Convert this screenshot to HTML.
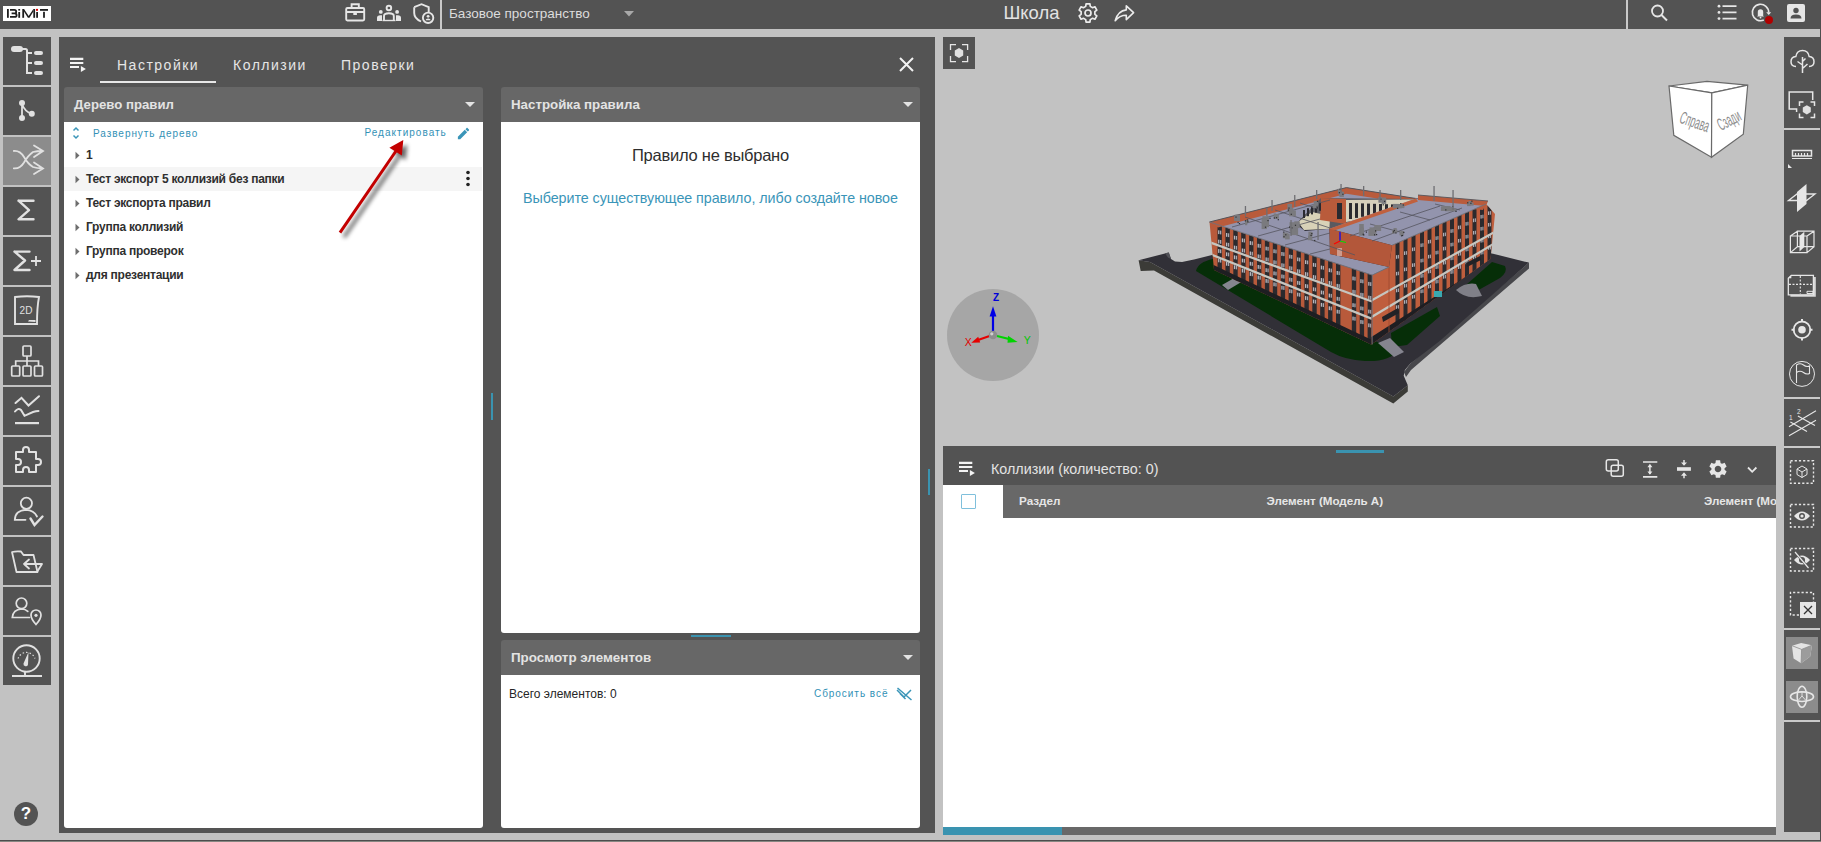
<!DOCTYPE html>
<html><head><meta charset="utf-8">
<style>
*{box-sizing:border-box;margin:0;padding:0}
html,body{width:1821px;height:842px;overflow:hidden;background:#c2c2c2;font-family:"Liberation Sans",sans-serif;position:relative}
.a{position:absolute}
.dk{background:#535353}
.hd{background:#676767;border-radius:3px 3px 0 0}
.wh{background:#fff}
.t{position:absolute;white-space:nowrap;line-height:1}
svg{position:absolute;overflow:visible}
</style></head>
<body>
<!-- top bar -->
<div class="a dk" style="left:0;top:0;width:1821px;height:29px"></div>
<div class="a" style="left:440px;top:0;width:2px;height:29px;background:#c9c9c9"></div>
<div class="a" style="left:1626px;top:0;width:2px;height:29px;background:#c9c9c9"></div>
<div class="a" style="left:1820px;top:0;width:1px;height:842px;background:#4e4e4e"></div>
<!-- logo -->
<div class="a" style="left:3px;top:6px;width:48px;height:15px;background:#fff"></div>
<svg width="48" height="15" viewBox="0 0 48 15" style="left:3px;top:6px">
<g fill="#1e1e1e">
<rect x="4" y="3" width="1.8" height="8.8"/>
<path d="M7 3.9H11.3Q13.2 3.9 13.2 5.65Q13.2 7.4 11.3 7.4H8.6M8.6 7.4H11.6Q13.6 7.4 13.6 9.15Q13.6 10.9 11.6 10.9H7" fill="none" stroke="#1e1e1e" stroke-width="1.8"/>
<rect x="15.3" y="6" width="1.8" height="5.8"/><rect x="15.3" y="3" width="1.8" height="1.6"/>
<rect x="19.3" y="3" width="1.8" height="8.8"/><rect x="30.3" y="3" width="1.8" height="8.8"/>
<path d="M21 3L25.7 10L30.4 3V5.5L26.5 11.8H24.9L21 5.5Z"/>
<rect x="33.2" y="6" width="1.8" height="5.8"/>
<rect x="37" y="3" width="8" height="1.8"/><rect x="40.1" y="5.8" width="1.8" height="6"/>
</g>
<rect x="33" y="2.9" width="2" height="1.9" fill="#e00000"/>
</svg>
<!-- top icons left -->
<svg width="100" height="28" viewBox="0 0 100 28" style="left:340px;top:0">
<g fill="none" stroke="#e6e6e6" stroke-width="1.9">
<rect x="6.2" y="8" width="18" height="12.5" rx="1.2"/>
<path d="M11.6 7.5V4.2H18.8V7.5M6.2 12H24.2"/>
<rect x="13.3" y="12" width="3.6" height="3" fill="#e6e6e6" stroke="none"/>
<circle cx="48.9" cy="8" r="2.3"/>
<path d="M44 21V16Q44 13.2 48.9 13.2Q53.8 13.2 53.8 16V21"/>
<path d="M58 4.6Q66 2 73.8 7V13M73.8 13" stroke="none"/>
<path d="M74.2 7.2L81.5 4.2L88.7 7.2V12.3"/>
<path d="M74.2 7.2V13Q74.2 18.5 81 21.5"/>
<circle cx="88.1" cy="17.8" r="5.2"/>
</g>
<g fill="#e6e6e6">
<circle cx="40.8" cy="11.9" r="1.9"/><circle cx="57.1" cy="11.9" r="1.9"/>
<path d="M37 21V17.8Q37 15.2 40.3 15.2H42V21Z"/><path d="M61 21V17.8Q61 15.2 57.7 15.2H56V21Z"/>
<circle cx="88.1" cy="16.3" r="1.4"/><path d="M85.6 20.3Q85.6 18.5 88.1 18.5Q90.6 18.5 90.6 20.3Z"/>
</g>
<rect x="42.5" y="19.8" width="13" height="1.4" fill="#e6e6e6"/>
</svg>
<div class="t" style="left:449px;top:6.9px;font-size:13.5px;color:#dcdcdc">Базовое пространство</div>
<svg width="12" height="8" style="left:623px;top:10px"><path d="M1 1H11L6 6.5Z" fill="#a9a9a9"/></svg>
<div class="t" style="left:1003.5px;top:4.4px;font-size:18.4px;color:#e3e3e3">Школа</div>
<!-- gear -->
<svg width="22" height="22" viewBox="0 0 22 22" style="left:1077.3px;top:2px"><path d="M8.72 4.38L9.07 1.90L12.93 1.90L13.28 4.38L15.59 5.72L17.91 4.78L19.84 8.13L17.87 9.66L17.87 12.34L19.84 13.87L17.91 17.22L15.59 16.28L13.28 17.62L12.93 20.10L9.07 20.10L8.72 17.62L6.41 16.28L4.09 17.22L2.16 13.87L4.13 12.34L4.13 9.66L2.16 8.13L4.09 4.78L6.41 5.72Z" fill="none" stroke="#ececec" stroke-width="1.7" stroke-linejoin="round"/><circle cx="11" cy="11" r="3" fill="none" stroke="#ececec" stroke-width="1.7"/></svg>
<!-- share -->
<svg width="22" height="18" viewBox="0 0 22 18" style="left:1113px;top:4px"><path d="M20.6 8.7L13.3 1.8V5.9Q5 6.7 2.2 16.8Q6.5 11.3 13.3 11.3V15.7Z" fill="none" stroke="#ececec" stroke-width="1.6" stroke-linejoin="round"/></svg>
<!-- right top icons -->
<svg width="30" height="28" viewBox="0 0 30 28" style="left:1645px;top:0"><circle cx="12.5" cy="11" r="5.5" fill="none" stroke="#e6e6e6" stroke-width="1.8"/><path d="M16.5 15L22 20.5" stroke="#e6e6e6" stroke-width="2"/></svg>
<svg width="30" height="28" viewBox="0 0 30 28" style="left:1713px;top:0">
<g fill="#e6e6e6"><circle cx="6" cy="6.2" r="1.4"/><circle cx="6" cy="12.4" r="1.4"/><circle cx="6" cy="18.6" r="1.4"/></g>
<path d="M9.5 6.2H23.5M9.5 12.4H23.5M9.5 18.6H23.5" stroke="#e6e6e6" stroke-width="1.8"/></svg>
<svg width="30" height="28" viewBox="0 0 30 28" style="left:1746px;top:0">
<path d="M22.7 12.5A8.2 8.2 0 1 0 17.8 20" fill="none" stroke="#e6e6e6" stroke-width="1.6"/><path d="M20.2 12.3H25.2L22.7 15Z" fill="#e6e6e6"/><path d="M11.8 15.8V12Q11.8 9.2 14.5 9.2Q17.2 9.2 17.2 12V15.8L18 16.6H11Z" fill="#e6e6e6"/><circle cx="14.5" cy="17.6" r="0.9" fill="#e6e6e6"/>
<circle cx="23" cy="20" r="4" fill="#b00000"/></svg>
<div class="a" style="left:1787px;top:4px;width:18px;height:18px;border-radius:2px;background:#e6e6e6"></div>
<svg width="18" height="18" viewBox="0 0 18 18" style="left:1787px;top:4px"><circle cx="9" cy="6.5" r="2.7" fill="#535353"/><path d="M3.5 14.5Q3.5 10.5 9 10.5Q14.5 10.5 14.5 14.5Z" fill="#535353"/></svg>
<!-- bottom strip -->
<div class="a" style="left:0;top:840px;width:1821px;height:1px;background:#4d4d4d"></div><div class="a" style="left:0;top:841px;width:1821px;height:1px;background:#878782"></div>

<!-- left sidebar buttons -->
<div class="a" style="left:3px;top:37px;width:48px;height:48px;background:#535353"><svg width="48" height="48" viewBox="0 0 48 48" style="left:0;top:0"><rect x="8" y="9" width="12" height="6" rx="3" fill="#e1e1e1"/><path d="M19 12H22.5Q24 12 24 13.5V36H29M24 16H29M24 26H29" fill="none" stroke="#e1e1e1" stroke-width="2"/><rect x="31" y="14" width="9" height="4" rx="2" fill="#e1e1e1"/><rect x="31" y="24" width="9" height="4" rx="2" fill="#e1e1e1"/><rect x="31" y="34" width="9" height="4" rx="2" fill="#e1e1e1"/></svg></div>
<div class="a" style="left:3px;top:87px;width:48px;height:48px;background:#535353"><svg width="48" height="48" viewBox="0 0 48 48" style="left:0;top:0"><path d="M19 16V31M19 17Q22 25 28.8 26.8" fill="none" stroke="#e1e1e1" stroke-width="1.8"/><circle cx="19" cy="16" r="3" fill="#e1e1e1"/><circle cx="19" cy="31" r="3" fill="#e1e1e1"/><circle cx="28.8" cy="26.8" r="3" fill="#e1e1e1"/></svg></div>
<div class="a" style="left:3px;top:137px;width:48px;height:48px;background:#8c8c8c"><svg width="48" height="48" viewBox="0 0 48 48" style="left:0;top:0"><path d="M10.8 14Q17 13.5 21 20Q25 27 30 30Q34 31.4 39 31.4M10.8 31.4Q17 32 21 25.5Q25 18.5 30 15Q34 14 39 14M31 8.5L40 14L31 20M31 25.5L40 31.4L31 37" fill="none" stroke="#e1e1e1" stroke-width="1.8" stroke-linecap="round"/></svg></div>
<div class="a" style="left:3px;top:187px;width:48px;height:48px;background:#535353"><svg width="48" height="48" viewBox="0 0 48 48" style="left:0;top:0"><path d="M15.5 13.7H30.5M15.5 13.7L26 23.2L15.5 32.3H30.5" fill="none" stroke="#e1e1e1" stroke-width="2.4" stroke-linecap="round" stroke-linejoin="round"/></svg></div>
<div class="a" style="left:3px;top:237px;width:48px;height:48px;background:#535353"><svg width="48" height="48" viewBox="0 0 48 48" style="left:0;top:0"><path d="M11.5 14.6H26.5M11.5 14.6L22 23.5L11.5 33H26.5" fill="none" stroke="#e1e1e1" stroke-width="2.4" stroke-linecap="round" stroke-linejoin="round"/><path d="M28 24H38M33 19V29" stroke="#e1e1e1" stroke-width="1.8"/></svg></div>
<div class="a" style="left:3px;top:287px;width:48px;height:48px;background:#535353"><svg width="48" height="48" viewBox="0 0 48 48" style="left:0;top:0"><path d="M12 10Q24 8.5 36 10Q34 20 34 37H12Z" fill="none" stroke="#e1e1e1" stroke-width="1.9"/><path d="M25 34.5L26 33H32.5V35Z" fill="#e1e1e1"/><text x="23" y="27" font-size="10" fill="#e1e1e1" text-anchor="middle" font-family="Liberation Sans">2D</text></svg></div>
<div class="a" style="left:3px;top:337px;width:48px;height:48px;background:#535353"><svg width="48" height="48" viewBox="0 0 48 48" style="left:0;top:0"><g fill="none" stroke="#e1e1e1" stroke-width="1.7"><rect x="20" y="9" width="8" height="10" rx="1"/><rect x="8.7" y="29" width="8" height="10" rx="1"/><rect x="20" y="29" width="8" height="10" rx="1"/><rect x="31.5" y="29" width="8" height="10" rx="1"/><path d="M24 19V29M12.7 29V24H35.5V29"/></g></svg></div>
<div class="a" style="left:3px;top:387px;width:48px;height:48px;background:#535353"><svg width="48" height="48" viewBox="0 0 48 48" style="left:0;top:0"><g fill="none" stroke="#e1e1e1" stroke-width="2" stroke-linecap="round"><path d="M12.5 16L18.5 10.8L25.5 18.5L36 9.2"/><path d="M12 24.5Q15 20.5 18 23L21.5 28.8L30 25Q33 24 35.5 24"/></g><rect x="12" y="35" width="24" height="2.2" fill="#e1e1e1"/></svg></div>
<div class="a" style="left:3px;top:437px;width:48px;height:48px;background:#535353"><svg width="48" height="48" viewBox="0 0 48 48" style="left:0;top:0"><path d="M13 15H20V13A3 3 0 0 1 26 13V15H33V22H35A3 3 0 0 1 35 28H33V35H26V33A3 3 0 0 0 20 33V35H13V28H15A3 3 0 0 0 15 22H13Z" fill="none" stroke="#e1e1e1" stroke-width="2" stroke-linejoin="round"/></svg></div>
<div class="a" style="left:3px;top:487px;width:48px;height:48px;background:#535353"><svg width="48" height="48" viewBox="0 0 48 48" style="left:0;top:0"><g fill="none" stroke="#e1e1e1" stroke-width="1.8" stroke-linecap="round"><circle cx="23.4" cy="16.3" r="5.6"/><path d="M22.5 32.8H11.8Q12 23.5 23 22.8Q31 23 34 29.5"/><path d="M27.5 31.5L31.5 38L39.5 29.5" stroke-width="2.4"/></g></svg></div>
<div class="a" style="left:3px;top:537px;width:48px;height:48px;background:#535353"><svg width="48" height="48" viewBox="0 0 48 48" style="left:0;top:0"><g fill="none" stroke="#e1e1e1" stroke-width="1.8" stroke-linejoin="round" stroke-linecap="round"><path d="M9 15Q13 14 18 14.5L20.5 18H30.5L34.5 35H13.5Z"/><path d="M33.5 27H39L34 35"/><path d="M34 27H21M26 22.5L21 27L26 31.5"/></g></svg></div>
<div class="a" style="left:3px;top:587px;width:48px;height:48px;background:#535353"><svg width="48" height="48" viewBox="0 0 48 48" style="left:0;top:0"><g fill="none" stroke="#e1e1e1" stroke-width="1.7" stroke-linecap="round"><circle cx="18.5" cy="16.3" r="5.3"/><path d="M26.5 30.5H9.3Q10 22.5 18.5 22Q22.5 22 24.8 24.3"/><path d="M33 37.5Q28 32 28 28A5 5 0 0 1 38 28Q38 32 33 37.5Z"/></g><circle cx="33" cy="28.3" r="1.6" fill="#e1e1e1"/></svg></div>
<div class="a" style="left:3px;top:637px;width:48px;height:48px;background:#535353"><svg width="48" height="48" viewBox="0 0 48 48" style="left:0;top:0"><g fill="none" stroke="#e1e1e1" stroke-width="1.9"><circle cx="23.5" cy="21.5" r="13.2"/><path d="M22 34.5V39M9 39H39"/><path d="M15 21.5A9 9 0 0 1 32 21.5" stroke-width="1.2" stroke-dasharray="1.5 2"/></g><path d="M20.5 26.5L25.5 15L25 27.5A2 2 0 0 1 20.5 26.5Z" fill="#e1e1e1"/></svg></div>
<div class="a" style="left:14px;top:802px;width:24px;height:24px;border-radius:50%;background:#535353"></div><div class="t" style="left:14px;top:805px;width:24px;text-align:center;font-size:17px;font-weight:700;color:#fff">?</div>


<!-- main dark panel -->
<div class="a" style="left:59px;top:37px;width:876px;height:796px;background:#545454"></div>

<!-- left panel: Дерево правил -->
<div class="a hd" style="left:64px;top:87px;width:419px;height:35px"></div>
<div class="a wh" style="left:64px;top:122px;width:419px;height:706px;border-radius:0 0 3px 3px"></div>
<div class="a" style="left:64px;top:167px;width:418px;height:24px;background:#f5f5f5"></div>

<!-- middle panel: Настройка правила -->
<div class="a hd" style="left:501px;top:87px;width:419px;height:35px"></div>
<div class="a wh" style="left:501px;top:122px;width:419px;height:511px;border-radius:0 0 3px 3px"></div>
<div class="a" style="left:691px;top:635px;width:40px;height:2px;background:#3a93b0"></div>
<div class="a hd" style="left:501px;top:640px;width:419px;height:35px"></div>
<div class="a wh" style="left:501px;top:675px;width:419px;height:153px;border-radius:0 0 3px 3px"></div>
<div class="a" style="left:491px;top:393px;width:2px;height:27px;background:#3a93b0"></div>
<div class="a" style="left:928px;top:469px;width:2px;height:26px;background:#3a93b0"></div>

<!-- main panel content -->
<svg width="20" height="16" viewBox="0 0 20 16" style="left:69px;top:57px"><path d="M1 1.9H14.3M1 6H14.3M1 10H10" stroke="#f4f4f4" stroke-width="2.1"/><path d="M11.9 8.9L16.9 12L11.9 15.1Z" fill="#f4f4f4"/></svg>
<div class="t" style="left:117px;top:58.3px;font-size:14px;letter-spacing:1.5px;color:#e6e6e6">Настройки</div>
<div class="a" style="left:100px;top:81px;width:116px;height:2px;background:#e8e8e8"></div>
<div class="t" style="left:233px;top:58.3px;font-size:14px;letter-spacing:1.5px;color:#e6e6e6">Коллизии</div>
<div class="t" style="left:341px;top:58.3px;font-size:14px;letter-spacing:1.5px;color:#e6e6e6">Проверки</div>
<svg width="15" height="15" viewBox="0 0 15 15" style="left:898.8px;top:57.4px"><path d="M1 1L14 14M14 1L1 14" stroke="#f2f2f2" stroke-width="2"/></svg>

<div class="t" style="left:74px;top:98px;font-size:13.2px;font-weight:700;color:#e3e3e3">Дерево правил</div>
<svg width="12" height="7" style="left:465px;top:101px"><path d="M0 1H10L5 6Z" fill="#e3e3e3"/></svg>
<div class="t" style="left:511px;top:98.2px;font-size:13.3px;font-weight:700;color:#e3e3e3">Настройка правила</div>
<svg width="12" height="7" style="left:903px;top:101px"><path d="M0 1H10L5 6Z" fill="#e3e3e3"/></svg>
<div class="t" style="left:511px;top:651.4px;font-size:13.4px;font-weight:700;color:#e3e3e3">Просмотр элементов</div>
<svg width="12" height="7" style="left:903px;top:654px"><path d="M0 1H10L5 6Z" fill="#e3e3e3"/></svg>

<!-- tree -->
<svg width="10" height="14" viewBox="0 0 10 14" style="left:71px;top:126px"><path d="M2.5 4.5L5 2L7.5 4.5M2.5 9.5L5 12L7.5 9.5" fill="none" stroke="#3a95b8" stroke-width="1.5"/></svg>
<div class="t" style="left:93px;top:128.6px;font-size:10px;letter-spacing:0.95px;color:#3291b6">Развернуть дерево</div>
<div class="t" style="left:364.5px;top:128.4px;font-size:10px;letter-spacing:1.02px;color:#3291b6">Редактировать</div>
<svg width="15" height="15" viewBox="0 0 24 24" style="left:455.5px;top:125.5px"><path fill="#3a95b8" d="M3 17.25V21h3.75L17.81 9.94l-3.75-3.75L3 17.25zM20.71 7.04c.39-.39.39-1.02 0-1.41l-2.34-2.34c-.39-.39-1.02-.39-1.41 0l-1.83 1.83 3.75 3.75 1.83-1.83z"/></svg>
<svg width="6" height="10" style="left:75px;top:151.4px"><path d="M0.5 0.8L4.5 4.5L0.5 8.2Z" fill="#6e6e6e"/></svg>
<div class="t" style="left:86px;top:149.04px;font-size:12px;font-weight:700;letter-spacing:-0.25px;color:#2f2f2f">1</div>
<svg width="6" height="10" style="left:75px;top:175.4px"><path d="M0.5 0.8L4.5 4.5L0.5 8.2Z" fill="#6e6e6e"/></svg>
<div class="t" style="left:86px;top:173.04px;font-size:12px;font-weight:700;letter-spacing:-0.25px;color:#2f2f2f">Тест экспорт 5 коллизий без папки</div>
<svg width="6" height="10" style="left:75px;top:199.4px"><path d="M0.5 0.8L4.5 4.5L0.5 8.2Z" fill="#6e6e6e"/></svg>
<div class="t" style="left:86px;top:197.04px;font-size:12px;font-weight:700;letter-spacing:-0.25px;color:#2f2f2f">Тест экспорта правил</div>
<svg width="6" height="10" style="left:75px;top:223.4px"><path d="M0.5 0.8L4.5 4.5L0.5 8.2Z" fill="#6e6e6e"/></svg>
<div class="t" style="left:86px;top:221.04px;font-size:12px;font-weight:700;letter-spacing:-0.25px;color:#2f2f2f">Группа коллизий</div>
<svg width="6" height="10" style="left:75px;top:247.4px"><path d="M0.5 0.8L4.5 4.5L0.5 8.2Z" fill="#6e6e6e"/></svg>
<div class="t" style="left:86px;top:245.04px;font-size:12px;font-weight:700;letter-spacing:-0.25px;color:#2f2f2f">Группа проверок</div>
<svg width="6" height="10" style="left:75px;top:271.4px"><path d="M0.5 0.8L4.5 4.5L0.5 8.2Z" fill="#6e6e6e"/></svg>
<div class="t" style="left:86px;top:269.04px;font-size:12px;font-weight:700;letter-spacing:-0.25px;color:#2f2f2f">для презентации</div>
<svg width="6" height="18" style="left:464.5px;top:170px"><circle cx="3" cy="2.5" r="1.8" fill="#222"/><circle cx="3" cy="8.5" r="1.8" fill="#222"/><circle cx="3" cy="14.5" r="1.8" fill="#222"/></svg>

<div class="t" style="left:632px;top:146.8px;font-size:16.5px;letter-spacing:-0.25px;color:#2e2e2e">Правило не выбрано</div>
<div class="t" style="left:523px;top:191.2px;font-size:14.3px;letter-spacing:-0.05px;color:#3a95b8">Выберите существующее правило, либо создайте новое</div>

<div class="t" style="left:509px;top:688.4px;font-size:12px;color:#262626">Всего элементов: 0</div>
<div class="t" style="left:814px;top:689.3px;font-size:10px;letter-spacing:0.95px;color:#3291b6">Сбросить всё</div>
<svg width="17" height="14" viewBox="0 0 17 14" style="left:896px;top:687px"><path d="M1 3L8 10L15 3M4 6.5L9.5 12M1.5 1L15.5 13" fill="none" stroke="#3a95b8" stroke-width="1.5"/></svg>
<svg width="90" height="110" viewBox="330 130 90 110" style="left:330px;top:130px">
<defs><filter id="sh" x="-50%" y="-50%" width="200%" height="200%"><feGaussianBlur stdDeviation="2.2"/></filter></defs>
<g transform="translate(4 4.5)" filter="url(#sh)" opacity="0.6"><path d="M340 232.7L395 152" stroke="#000" stroke-width="3.4"/><path d="M403.3 140.1L389.4 147.8L401.8 155.5Z" fill="#000"/></g>
<path d="M340 232.7L396 151" stroke="#c30000" stroke-width="3"/><path d="M403.3 140.1L389.4 147.8L401.8 155.5Z" fill="#c30000"/>
</svg>
<!-- viewer -->
<div class="a dk" style="left:943px;top:37px;width:32px;height:32px"></div>

<svg width="32" height="32" viewBox="0 0 32 32" style="left:943px;top:37px"><path d="M7.5 13V7.6H13M19 7.6H24.6V13M24.6 19V24.6H19M13 24.6H7.5V19" fill="none" stroke="#e6e6e6" stroke-width="1.3"/><path d="M16 11L20.2 13.5V18.5L16 21L11.8 18.5V13.5Z" fill="#e0e0e0"/></svg>
<!-- gizmo -->
<div class="a" style="left:947px;top:289px;width:92px;height:92px;border-radius:50%;background:#a6a6a6"></div>
<svg width="92" height="92" viewBox="0 0 92 92" style="left:947px;top:289px">
<path d="M46 43V26" stroke="#0000e6" stroke-width="2.2"/><path d="M42.6 27.5L46 17.3L49.4 27.5Z" fill="#0000e6"/>
<path d="M44 46.5L31 51" stroke="#e60000" stroke-width="2.2"/><path d="M24.3 53.8L31.2 47.8L33.2 53.6Z" fill="#e60000"/>
<path d="M48 46.5L62 50" stroke="#00d400" stroke-width="2.2"/><path d="M70.6 53L61 46.8L60.5 53.8Z" fill="#00d400"/>
<circle cx="46" cy="46" r="4.3" fill="#8e8e8e"/><circle cx="44.8" cy="44.8" r="1.6" fill="#d0d0d0"/>
<text x="49" y="12" font-size="10" font-weight="700" fill="#0000d8" text-anchor="middle" font-family="Liberation Sans">Z</text>
<text x="21.2" y="56.6" font-size="10.5" fill="#e00000" text-anchor="middle" font-family="Liberation Sans">X</text>
<text x="80.2" y="55" font-size="10.5" fill="#00c800" text-anchor="middle" font-family="Liberation Sans">Y</text>
</svg>
<!-- view cube -->
<svg width="100" height="90" viewBox="0 0 100 90" style="left:1650px;top:70px">
<path d="M19 16L57 11.3L97.7 15.2L61.8 22.8Z" fill="#ffffff" stroke="#6a6a6a" stroke-width="1.2"/>
<path d="M19 16L61.8 22.8L61.5 87.3L23.8 65.3Z" fill="#ffffff" stroke="#6a6a6a" stroke-width="1.2"/>
<path d="M61.8 22.8L97.7 15.2L93.3 64.2L61.5 87.3Z" fill="#ffffff" stroke="#6a6a6a" stroke-width="1.2"/>
<text transform="translate(28.5 52.5) rotate(19) scale(0.5 1)" font-size="17.5" fill="#8d8d8d" font-family="Liberation Sans">Справа</text>
<text transform="translate(71 61) rotate(-28) scale(0.48 1)" font-size="17.5" fill="#8d8d8d" font-family="Liberation Sans">Сзади</text>
</svg>
<svg width="420" height="240" viewBox="1125 172 420 240" style="left:1125px;top:172px">
<defs>
<clipPath id="lf"><polygon points="1209.5,222.0 1372.2,275.1 1371.3,344.5 1214.0,270.0"/></clipPath>
<clipPath id="rf"><polygon points="1372.2,275.1 1389.0,267.0 1392.0,245.0 1486.0,204.0 1495.0,214.0 1490.5,259.0 1371.3,344.5"/></clipPath>
</defs>
<polygon points="1138.6,260.3 1140.7,271.0 1154.0,270.6 1393.3,403.6 1407.8,391.6 1407.8,385.3 1393.3,396.5 1150.0,262.0" fill="#3b3b37"/>
<polygon points="1404.0,372.0 1410.0,364.0 1529.0,262.6 1529.0,268.5 1411.0,370.0 1406.0,377.0" fill="#47474b"/>
<polygon points="1138.6,260.3 1168.8,252.5 1171.0,259.0 1175.0,261.5 1182.0,262.0 1194.0,259.6 1212.0,255.0 1300.0,212.0 1493.0,253.7 1528.9,262.6 1440.0,340.8 1409.9,364.0 1404.9,370.0 1403.7,375.8 1407.8,385.3 1393.3,396.5 1150.0,262.0" fill="#313037"/>
<polygon points="1165.0,253.3 1168.8,252.5 1171.0,259.0 1168.0,257.5" fill="#505056"/>
<path d="M1196 271Q1198 262 1213 259L1372 340L1398 350Q1390 362 1365 361Q1345 360 1331 352Z" fill="#062e08"/>
<polygon points="1391.0,333.0 1437.0,307.0 1440.0,316.0 1407.0,345.0 1392.0,347.0" fill="#062e08"/>
<path d="M1466 285L1492 262L1505 266Q1508 272 1500 278L1475 292Q1468 292 1466 285Z" fill="#062e08"/>
<polygon points="1378.0,343.0 1390.0,338.0 1404.0,352.0 1394.0,357.0" fill="#85858f"/>
<polygon points="1222.0,285.0 1236.0,277.0 1243.0,281.0 1228.0,290.0" fill="#85858f"/>
<path d="M1456 290Q1466 282 1476 284L1482 296Q1466 300 1456 290Z" fill="#808088"/>
<polygon points="1209.5,222.0 1372.2,275.1 1371.3,344.5 1214.0,270.0" fill="#b85a3b"/>
<g clip-path="url(#lf)">
<rect x="1217.5" y="200" width="4.4" height="160" fill="#2b2a2e"/>
<rect x="1225.4" y="200" width="4.4" height="160" fill="#2b2a2e"/>
<rect x="1233.3" y="200" width="4.4" height="160" fill="#2b2a2e"/>
<rect x="1241.2" y="200" width="4.4" height="160" fill="#2b2a2e"/>
<rect x="1249.1" y="200" width="4.4" height="160" fill="#2b2a2e"/>
<rect x="1257.0" y="200" width="4.4" height="160" fill="#2b2a2e"/>
<rect x="1264.9" y="200" width="4.4" height="160" fill="#2b2a2e"/>
<rect x="1272.8" y="200" width="4.4" height="160" fill="#2b2a2e"/>
<rect x="1280.7" y="200" width="4.4" height="160" fill="#2b2a2e"/>
<rect x="1288.6" y="200" width="4.4" height="160" fill="#2b2a2e"/>
<rect x="1296.5" y="200" width="4.4" height="160" fill="#2b2a2e"/>
<rect x="1304.4" y="200" width="4.4" height="160" fill="#2b2a2e"/>
<rect x="1312.3" y="200" width="4.4" height="160" fill="#2b2a2e"/>
<rect x="1320.2" y="200" width="4.4" height="160" fill="#2b2a2e"/>
<rect x="1328.1" y="200" width="4.4" height="160" fill="#2b2a2e"/>
<rect x="1336.0" y="200" width="4.4" height="160" fill="#2b2a2e"/>
<rect x="1351.8" y="200" width="4.4" height="160" fill="#2b2a2e"/>
<rect x="1359.7" y="200" width="4.4" height="160" fill="#2b2a2e"/>
<rect x="1367.6" y="200" width="4.4" height="160" fill="#2b2a2e"/>
<rect x="1218.1" y="230.3" width="1.3" height="3.8" fill="#b8b8c0"/>
<rect x="1220.0" y="230.6" width="1.3" height="3.8" fill="#a8a8b0"/>
<rect x="1218.1" y="239.7" width="1.3" height="3.8" fill="#b8b8c0"/>
<rect x="1220.0" y="240.0" width="1.3" height="3.8" fill="#a8a8b0"/>
<rect x="1218.1" y="249.1" width="1.3" height="3.8" fill="#b8b8c0"/>
<rect x="1220.0" y="249.4" width="1.3" height="3.8" fill="#a8a8b0"/>
<rect x="1218.1" y="258.5" width="1.3" height="3.8" fill="#b8b8c0"/>
<rect x="1220.0" y="258.8" width="1.3" height="3.8" fill="#a8a8b0"/>
<rect x="1226.0" y="233.0" width="1.3" height="3.8" fill="#b8b8c0"/>
<rect x="1227.9" y="233.3" width="1.3" height="3.8" fill="#a8a8b0"/>
<rect x="1226.0" y="242.6" width="1.3" height="3.8" fill="#b8b8c0"/>
<rect x="1227.9" y="242.9" width="1.3" height="3.8" fill="#a8a8b0"/>
<rect x="1226.0" y="252.3" width="1.3" height="3.8" fill="#b8b8c0"/>
<rect x="1227.9" y="252.6" width="1.3" height="3.8" fill="#a8a8b0"/>
<rect x="1226.0" y="261.9" width="1.3" height="3.8" fill="#b8b8c0"/>
<rect x="1227.9" y="262.2" width="1.3" height="3.8" fill="#a8a8b0"/>
<rect x="1233.9" y="235.7" width="1.3" height="3.8" fill="#b8b8c0"/>
<rect x="1235.8" y="236.0" width="1.3" height="3.8" fill="#a8a8b0"/>
<rect x="1233.9" y="245.6" width="1.3" height="3.8" fill="#b8b8c0"/>
<rect x="1235.8" y="245.9" width="1.3" height="3.8" fill="#a8a8b0"/>
<rect x="1233.9" y="255.4" width="1.3" height="3.8" fill="#b8b8c0"/>
<rect x="1235.8" y="255.7" width="1.3" height="3.8" fill="#a8a8b0"/>
<rect x="1233.9" y="265.3" width="1.3" height="3.8" fill="#b8b8c0"/>
<rect x="1235.8" y="265.6" width="1.3" height="3.8" fill="#a8a8b0"/>
<rect x="1241.8" y="238.4" width="1.3" height="3.8" fill="#b8b8c0"/>
<rect x="1243.7" y="238.7" width="1.3" height="3.8" fill="#a8a8b0"/>
<rect x="1241.8" y="248.5" width="1.3" height="3.8" fill="#b8b8c0"/>
<rect x="1243.7" y="248.8" width="1.3" height="3.8" fill="#a8a8b0"/>
<rect x="1241.8" y="258.6" width="1.3" height="3.8" fill="#b8b8c0"/>
<rect x="1243.7" y="258.9" width="1.3" height="3.8" fill="#a8a8b0"/>
<rect x="1241.8" y="268.7" width="1.3" height="3.8" fill="#b8b8c0"/>
<rect x="1243.7" y="269.0" width="1.3" height="3.8" fill="#a8a8b0"/>
<rect x="1249.7" y="241.1" width="1.3" height="3.8" fill="#b8b8c0"/>
<rect x="1251.6" y="241.4" width="1.3" height="3.8" fill="#a8a8b0"/>
<rect x="1249.7" y="251.5" width="1.3" height="3.8" fill="#b8b8c0"/>
<rect x="1251.6" y="251.8" width="1.3" height="3.8" fill="#a8a8b0"/>
<rect x="1249.7" y="261.8" width="1.3" height="3.8" fill="#b8b8c0"/>
<rect x="1251.6" y="262.1" width="1.3" height="3.8" fill="#a8a8b0"/>
<rect x="1249.7" y="272.1" width="1.3" height="3.8" fill="#b8b8c0"/>
<rect x="1251.6" y="272.4" width="1.3" height="3.8" fill="#a8a8b0"/>
<rect x="1257.6" y="243.8" width="1.3" height="3.8" fill="#b8b8c0"/>
<rect x="1259.5" y="244.1" width="1.3" height="3.8" fill="#a8a8b0"/>
<rect x="1257.6" y="254.4" width="1.3" height="3.8" fill="#b8b8c0"/>
<rect x="1259.5" y="254.7" width="1.3" height="3.8" fill="#a8a8b0"/>
<rect x="1257.6" y="265.0" width="1.3" height="3.8" fill="#b8b8c0"/>
<rect x="1259.5" y="265.3" width="1.3" height="3.8" fill="#a8a8b0"/>
<rect x="1257.6" y="275.6" width="1.3" height="3.8" fill="#b8b8c0"/>
<rect x="1259.5" y="275.9" width="1.3" height="3.8" fill="#a8a8b0"/>
<rect x="1265.5" y="246.6" width="1.3" height="3.8" fill="#b8b8c0"/>
<rect x="1267.4" y="246.9" width="1.3" height="3.8" fill="#a8a8b0"/>
<rect x="1265.5" y="257.4" width="1.3" height="3.8" fill="#b8b8c0"/>
<rect x="1267.4" y="257.7" width="1.3" height="3.8" fill="#a8a8b0"/>
<rect x="1265.5" y="268.2" width="1.3" height="3.8" fill="#b8b8c0"/>
<rect x="1267.4" y="268.5" width="1.3" height="3.8" fill="#a8a8b0"/>
<rect x="1265.5" y="279.0" width="1.3" height="3.8" fill="#b8b8c0"/>
<rect x="1267.4" y="279.3" width="1.3" height="3.8" fill="#a8a8b0"/>
<rect x="1273.4" y="249.3" width="1.3" height="3.8" fill="#b8b8c0"/>
<rect x="1275.3" y="249.6" width="1.3" height="3.8" fill="#a8a8b0"/>
<rect x="1273.4" y="260.3" width="1.3" height="3.8" fill="#b8b8c0"/>
<rect x="1275.3" y="260.6" width="1.3" height="3.8" fill="#a8a8b0"/>
<rect x="1273.4" y="271.4" width="1.3" height="3.8" fill="#b8b8c0"/>
<rect x="1275.3" y="271.7" width="1.3" height="3.8" fill="#a8a8b0"/>
<rect x="1273.4" y="282.4" width="1.3" height="3.8" fill="#b8b8c0"/>
<rect x="1275.3" y="282.7" width="1.3" height="3.8" fill="#a8a8b0"/>
<rect x="1281.3" y="252.0" width="1.3" height="3.8" fill="#b8b8c0"/>
<rect x="1283.2" y="252.3" width="1.3" height="3.8" fill="#a8a8b0"/>
<rect x="1281.3" y="263.3" width="1.3" height="3.8" fill="#b8b8c0"/>
<rect x="1283.2" y="263.6" width="1.3" height="3.8" fill="#a8a8b0"/>
<rect x="1281.3" y="274.5" width="1.3" height="3.8" fill="#b8b8c0"/>
<rect x="1283.2" y="274.8" width="1.3" height="3.8" fill="#a8a8b0"/>
<rect x="1281.3" y="285.8" width="1.3" height="3.8" fill="#b8b8c0"/>
<rect x="1283.2" y="286.1" width="1.3" height="3.8" fill="#a8a8b0"/>
<rect x="1289.2" y="254.7" width="1.3" height="3.8" fill="#b8b8c0"/>
<rect x="1291.1" y="255.0" width="1.3" height="3.8" fill="#a8a8b0"/>
<rect x="1289.2" y="266.2" width="1.3" height="3.8" fill="#b8b8c0"/>
<rect x="1291.1" y="266.5" width="1.3" height="3.8" fill="#a8a8b0"/>
<rect x="1289.2" y="277.7" width="1.3" height="3.8" fill="#b8b8c0"/>
<rect x="1291.1" y="278.0" width="1.3" height="3.8" fill="#a8a8b0"/>
<rect x="1289.2" y="289.2" width="1.3" height="3.8" fill="#b8b8c0"/>
<rect x="1291.1" y="289.5" width="1.3" height="3.8" fill="#a8a8b0"/>
<rect x="1297.1" y="257.4" width="1.3" height="3.8" fill="#b8b8c0"/>
<rect x="1299.0" y="257.7" width="1.3" height="3.8" fill="#a8a8b0"/>
<rect x="1297.1" y="269.2" width="1.3" height="3.8" fill="#b8b8c0"/>
<rect x="1299.0" y="269.5" width="1.3" height="3.8" fill="#a8a8b0"/>
<rect x="1297.1" y="280.9" width="1.3" height="3.8" fill="#b8b8c0"/>
<rect x="1299.0" y="281.2" width="1.3" height="3.8" fill="#a8a8b0"/>
<rect x="1297.1" y="292.6" width="1.3" height="3.8" fill="#b8b8c0"/>
<rect x="1299.0" y="292.9" width="1.3" height="3.8" fill="#a8a8b0"/>
<rect x="1305.0" y="260.2" width="1.3" height="3.8" fill="#b8b8c0"/>
<rect x="1306.9" y="260.5" width="1.3" height="3.8" fill="#a8a8b0"/>
<rect x="1305.0" y="272.1" width="1.3" height="3.8" fill="#b8b8c0"/>
<rect x="1306.9" y="272.4" width="1.3" height="3.8" fill="#a8a8b0"/>
<rect x="1305.0" y="284.1" width="1.3" height="3.8" fill="#b8b8c0"/>
<rect x="1306.9" y="284.4" width="1.3" height="3.8" fill="#a8a8b0"/>
<rect x="1305.0" y="296.1" width="1.3" height="3.8" fill="#b8b8c0"/>
<rect x="1306.9" y="296.4" width="1.3" height="3.8" fill="#a8a8b0"/>
<rect x="1312.9" y="262.9" width="1.3" height="3.8" fill="#b8b8c0"/>
<rect x="1314.8" y="263.2" width="1.3" height="3.8" fill="#a8a8b0"/>
<rect x="1312.9" y="275.1" width="1.3" height="3.8" fill="#b8b8c0"/>
<rect x="1314.8" y="275.4" width="1.3" height="3.8" fill="#a8a8b0"/>
<rect x="1312.9" y="287.3" width="1.3" height="3.8" fill="#b8b8c0"/>
<rect x="1314.8" y="287.6" width="1.3" height="3.8" fill="#a8a8b0"/>
<rect x="1312.9" y="299.5" width="1.3" height="3.8" fill="#b8b8c0"/>
<rect x="1314.8" y="299.8" width="1.3" height="3.8" fill="#a8a8b0"/>
<rect x="1320.8" y="265.6" width="1.3" height="3.8" fill="#b8b8c0"/>
<rect x="1322.7" y="265.9" width="1.3" height="3.8" fill="#a8a8b0"/>
<rect x="1320.8" y="278.0" width="1.3" height="3.8" fill="#b8b8c0"/>
<rect x="1322.7" y="278.3" width="1.3" height="3.8" fill="#a8a8b0"/>
<rect x="1320.8" y="290.5" width="1.3" height="3.8" fill="#b8b8c0"/>
<rect x="1322.7" y="290.8" width="1.3" height="3.8" fill="#a8a8b0"/>
<rect x="1320.8" y="302.9" width="1.3" height="3.8" fill="#b8b8c0"/>
<rect x="1322.7" y="303.2" width="1.3" height="3.8" fill="#a8a8b0"/>
<rect x="1328.7" y="268.3" width="1.3" height="3.8" fill="#b8b8c0"/>
<rect x="1330.6" y="268.6" width="1.3" height="3.8" fill="#a8a8b0"/>
<rect x="1328.7" y="281.0" width="1.3" height="3.8" fill="#b8b8c0"/>
<rect x="1330.6" y="281.3" width="1.3" height="3.8" fill="#a8a8b0"/>
<rect x="1328.7" y="293.6" width="1.3" height="3.8" fill="#b8b8c0"/>
<rect x="1330.6" y="293.9" width="1.3" height="3.8" fill="#a8a8b0"/>
<rect x="1328.7" y="306.3" width="1.3" height="3.8" fill="#b8b8c0"/>
<rect x="1330.6" y="306.6" width="1.3" height="3.8" fill="#a8a8b0"/>
<rect x="1336.6" y="271.0" width="1.3" height="3.8" fill="#b8b8c0"/>
<rect x="1338.5" y="271.3" width="1.3" height="3.8" fill="#a8a8b0"/>
<rect x="1336.6" y="283.9" width="1.3" height="3.8" fill="#b8b8c0"/>
<rect x="1338.5" y="284.2" width="1.3" height="3.8" fill="#a8a8b0"/>
<rect x="1336.6" y="296.8" width="1.3" height="3.8" fill="#b8b8c0"/>
<rect x="1338.5" y="297.1" width="1.3" height="3.8" fill="#a8a8b0"/>
<rect x="1336.6" y="309.7" width="1.3" height="3.8" fill="#b8b8c0"/>
<rect x="1338.5" y="310.0" width="1.3" height="3.8" fill="#a8a8b0"/>
<rect x="1352.4" y="276.5" width="1.3" height="3.8" fill="#b8b8c0"/>
<rect x="1354.3" y="276.8" width="1.3" height="3.8" fill="#a8a8b0"/>
<rect x="1352.4" y="289.8" width="1.3" height="3.8" fill="#b8b8c0"/>
<rect x="1354.3" y="290.1" width="1.3" height="3.8" fill="#a8a8b0"/>
<rect x="1352.4" y="303.2" width="1.3" height="3.8" fill="#b8b8c0"/>
<rect x="1354.3" y="303.5" width="1.3" height="3.8" fill="#a8a8b0"/>
<rect x="1352.4" y="316.6" width="1.3" height="3.8" fill="#b8b8c0"/>
<rect x="1354.3" y="316.9" width="1.3" height="3.8" fill="#a8a8b0"/>
<rect x="1360.3" y="279.2" width="1.3" height="3.8" fill="#b8b8c0"/>
<rect x="1362.2" y="279.5" width="1.3" height="3.8" fill="#a8a8b0"/>
<rect x="1360.3" y="292.8" width="1.3" height="3.8" fill="#b8b8c0"/>
<rect x="1362.2" y="293.1" width="1.3" height="3.8" fill="#a8a8b0"/>
<rect x="1360.3" y="306.4" width="1.3" height="3.8" fill="#b8b8c0"/>
<rect x="1362.2" y="306.7" width="1.3" height="3.8" fill="#a8a8b0"/>
<rect x="1360.3" y="320.0" width="1.3" height="3.8" fill="#b8b8c0"/>
<rect x="1362.2" y="320.3" width="1.3" height="3.8" fill="#a8a8b0"/>
<rect x="1368.2" y="281.9" width="1.3" height="3.8" fill="#b8b8c0"/>
<rect x="1370.1" y="282.2" width="1.3" height="3.8" fill="#a8a8b0"/>
<rect x="1368.2" y="295.7" width="1.3" height="3.8" fill="#b8b8c0"/>
<rect x="1370.1" y="296.0" width="1.3" height="3.8" fill="#a8a8b0"/>
<rect x="1368.2" y="309.6" width="1.3" height="3.8" fill="#b8b8c0"/>
<rect x="1370.1" y="309.9" width="1.3" height="3.8" fill="#a8a8b0"/>
<rect x="1368.2" y="323.4" width="1.3" height="3.8" fill="#b8b8c0"/>
<rect x="1370.1" y="323.7" width="1.3" height="3.8" fill="#a8a8b0"/>
<path d="M1205 240.5L1380 304.5" stroke="#c6c6c0" stroke-width="2.2"/>
<path d="M1205 252L1380 322" stroke="#c6c6c0" stroke-width="2.2"/>
<polygon points="1205,261 1380,343.8 1380,350 1205,268" fill="#1e1e22"/>
<path d="M1205 267L1380 349.5" stroke="#8a8a8a" stroke-width="1"/>
</g>
<polygon points="1372.2,275.1 1389.0,267.0 1392.0,245.0 1486.0,204.0 1495.0,214.0 1490.5,259.0 1371.3,344.5" fill="#bf5e3d"/>
<g clip-path="url(#rf)">
<rect x="1395.5" y="190" width="4" height="160" fill="#2b2a2e"/>
<rect x="1403.5" y="190" width="4" height="160" fill="#2b2a2e"/>
<rect x="1411.5" y="190" width="4" height="160" fill="#2b2a2e"/>
<rect x="1420.0" y="190" width="4" height="160" fill="#2b2a2e"/>
<rect x="1427.5" y="190" width="4" height="160" fill="#2b2a2e"/>
<rect x="1435.0" y="190" width="4" height="160" fill="#2b2a2e"/>
<rect x="1442.5" y="190" width="4" height="160" fill="#2b2a2e"/>
<rect x="1450.0" y="190" width="4" height="160" fill="#2b2a2e"/>
<rect x="1457.5" y="190" width="4" height="160" fill="#2b2a2e"/>
<rect x="1465.0" y="190" width="4" height="160" fill="#2b2a2e"/>
<rect x="1472.5" y="190" width="4" height="160" fill="#2b2a2e"/>
<rect x="1480.0" y="190" width="4" height="160" fill="#2b2a2e"/>
<rect x="1487.5" y="190" width="4" height="160" fill="#2b2a2e"/>
<rect x="1396.0" y="255.2" width="1.2" height="3.6" fill="#b0b0b8"/>
<rect x="1397.8" y="254.9" width="1.2" height="3.6" fill="#a0a0a8"/>
<rect x="1396.0" y="271.9" width="1.2" height="3.6" fill="#b0b0b8"/>
<rect x="1397.8" y="271.6" width="1.2" height="3.6" fill="#a0a0a8"/>
<rect x="1396.0" y="288.7" width="1.2" height="3.6" fill="#b0b0b8"/>
<rect x="1397.8" y="288.4" width="1.2" height="3.6" fill="#a0a0a8"/>
<rect x="1396.0" y="305.4" width="1.2" height="3.6" fill="#b0b0b8"/>
<rect x="1397.8" y="305.1" width="1.2" height="3.6" fill="#a0a0a8"/>
<rect x="1404.0" y="251.4" width="1.2" height="3.6" fill="#b0b0b8"/>
<rect x="1405.8" y="251.1" width="1.2" height="3.6" fill="#a0a0a8"/>
<rect x="1404.0" y="267.7" width="1.2" height="3.6" fill="#b0b0b8"/>
<rect x="1405.8" y="267.4" width="1.2" height="3.6" fill="#a0a0a8"/>
<rect x="1404.0" y="284.0" width="1.2" height="3.6" fill="#b0b0b8"/>
<rect x="1405.8" y="283.7" width="1.2" height="3.6" fill="#a0a0a8"/>
<rect x="1404.0" y="300.2" width="1.2" height="3.6" fill="#b0b0b8"/>
<rect x="1405.8" y="299.9" width="1.2" height="3.6" fill="#a0a0a8"/>
<rect x="1412.0" y="247.6" width="1.2" height="3.6" fill="#b0b0b8"/>
<rect x="1413.8" y="247.3" width="1.2" height="3.6" fill="#a0a0a8"/>
<rect x="1412.0" y="263.4" width="1.2" height="3.6" fill="#b0b0b8"/>
<rect x="1413.8" y="263.1" width="1.2" height="3.6" fill="#a0a0a8"/>
<rect x="1412.0" y="279.2" width="1.2" height="3.6" fill="#b0b0b8"/>
<rect x="1413.8" y="278.9" width="1.2" height="3.6" fill="#a0a0a8"/>
<rect x="1412.0" y="295.1" width="1.2" height="3.6" fill="#b0b0b8"/>
<rect x="1413.8" y="294.8" width="1.2" height="3.6" fill="#a0a0a8"/>
<rect x="1420.5" y="243.5" width="1.2" height="3.6" fill="#b0b0b8"/>
<rect x="1422.3" y="243.2" width="1.2" height="3.6" fill="#a0a0a8"/>
<rect x="1420.5" y="258.9" width="1.2" height="3.6" fill="#b0b0b8"/>
<rect x="1422.3" y="258.6" width="1.2" height="3.6" fill="#a0a0a8"/>
<rect x="1420.5" y="274.2" width="1.2" height="3.6" fill="#b0b0b8"/>
<rect x="1422.3" y="273.9" width="1.2" height="3.6" fill="#a0a0a8"/>
<rect x="1420.5" y="289.6" width="1.2" height="3.6" fill="#b0b0b8"/>
<rect x="1422.3" y="289.3" width="1.2" height="3.6" fill="#a0a0a8"/>
<rect x="1428.0" y="240.0" width="1.2" height="3.6" fill="#b0b0b8"/>
<rect x="1429.8" y="239.7" width="1.2" height="3.6" fill="#a0a0a8"/>
<rect x="1428.0" y="254.9" width="1.2" height="3.6" fill="#b0b0b8"/>
<rect x="1429.8" y="254.6" width="1.2" height="3.6" fill="#a0a0a8"/>
<rect x="1428.0" y="269.8" width="1.2" height="3.6" fill="#b0b0b8"/>
<rect x="1429.8" y="269.5" width="1.2" height="3.6" fill="#a0a0a8"/>
<rect x="1428.0" y="284.8" width="1.2" height="3.6" fill="#b0b0b8"/>
<rect x="1429.8" y="284.5" width="1.2" height="3.6" fill="#a0a0a8"/>
<rect x="1435.5" y="236.4" width="1.2" height="3.6" fill="#b0b0b8"/>
<rect x="1437.3" y="236.1" width="1.2" height="3.6" fill="#a0a0a8"/>
<rect x="1435.5" y="250.9" width="1.2" height="3.6" fill="#b0b0b8"/>
<rect x="1437.3" y="250.6" width="1.2" height="3.6" fill="#a0a0a8"/>
<rect x="1435.5" y="265.4" width="1.2" height="3.6" fill="#b0b0b8"/>
<rect x="1437.3" y="265.1" width="1.2" height="3.6" fill="#a0a0a8"/>
<rect x="1435.5" y="279.9" width="1.2" height="3.6" fill="#b0b0b8"/>
<rect x="1437.3" y="279.6" width="1.2" height="3.6" fill="#a0a0a8"/>
<rect x="1443.0" y="232.8" width="1.2" height="3.6" fill="#b0b0b8"/>
<rect x="1444.8" y="232.5" width="1.2" height="3.6" fill="#a0a0a8"/>
<rect x="1443.0" y="246.9" width="1.2" height="3.6" fill="#b0b0b8"/>
<rect x="1444.8" y="246.6" width="1.2" height="3.6" fill="#a0a0a8"/>
<rect x="1443.0" y="261.0" width="1.2" height="3.6" fill="#b0b0b8"/>
<rect x="1444.8" y="260.7" width="1.2" height="3.6" fill="#a0a0a8"/>
<rect x="1443.0" y="275.1" width="1.2" height="3.6" fill="#b0b0b8"/>
<rect x="1444.8" y="274.8" width="1.2" height="3.6" fill="#a0a0a8"/>
<rect x="1450.5" y="229.3" width="1.2" height="3.6" fill="#b0b0b8"/>
<rect x="1452.3" y="229.0" width="1.2" height="3.6" fill="#a0a0a8"/>
<rect x="1450.5" y="242.9" width="1.2" height="3.6" fill="#b0b0b8"/>
<rect x="1452.3" y="242.6" width="1.2" height="3.6" fill="#a0a0a8"/>
<rect x="1450.5" y="256.6" width="1.2" height="3.6" fill="#b0b0b8"/>
<rect x="1452.3" y="256.3" width="1.2" height="3.6" fill="#a0a0a8"/>
<rect x="1450.5" y="270.3" width="1.2" height="3.6" fill="#b0b0b8"/>
<rect x="1452.3" y="270.0" width="1.2" height="3.6" fill="#a0a0a8"/>
<rect x="1458.0" y="225.7" width="1.2" height="3.6" fill="#b0b0b8"/>
<rect x="1459.8" y="225.4" width="1.2" height="3.6" fill="#a0a0a8"/>
<rect x="1458.0" y="239.0" width="1.2" height="3.6" fill="#b0b0b8"/>
<rect x="1459.8" y="238.7" width="1.2" height="3.6" fill="#a0a0a8"/>
<rect x="1458.0" y="252.2" width="1.2" height="3.6" fill="#b0b0b8"/>
<rect x="1459.8" y="251.9" width="1.2" height="3.6" fill="#a0a0a8"/>
<rect x="1458.0" y="265.4" width="1.2" height="3.6" fill="#b0b0b8"/>
<rect x="1459.8" y="265.1" width="1.2" height="3.6" fill="#a0a0a8"/>
<rect x="1465.5" y="222.1" width="1.2" height="3.6" fill="#b0b0b8"/>
<rect x="1467.3" y="221.8" width="1.2" height="3.6" fill="#a0a0a8"/>
<rect x="1465.5" y="235.0" width="1.2" height="3.6" fill="#b0b0b8"/>
<rect x="1467.3" y="234.7" width="1.2" height="3.6" fill="#a0a0a8"/>
<rect x="1465.5" y="247.8" width="1.2" height="3.6" fill="#b0b0b8"/>
<rect x="1467.3" y="247.5" width="1.2" height="3.6" fill="#a0a0a8"/>
<rect x="1465.5" y="260.6" width="1.2" height="3.6" fill="#b0b0b8"/>
<rect x="1467.3" y="260.3" width="1.2" height="3.6" fill="#a0a0a8"/>
<rect x="1473.0" y="218.6" width="1.2" height="3.6" fill="#b0b0b8"/>
<rect x="1474.8" y="218.3" width="1.2" height="3.6" fill="#a0a0a8"/>
<rect x="1473.0" y="231.0" width="1.2" height="3.6" fill="#b0b0b8"/>
<rect x="1474.8" y="230.7" width="1.2" height="3.6" fill="#a0a0a8"/>
<rect x="1473.0" y="243.4" width="1.2" height="3.6" fill="#b0b0b8"/>
<rect x="1474.8" y="243.1" width="1.2" height="3.6" fill="#a0a0a8"/>
<rect x="1473.0" y="255.8" width="1.2" height="3.6" fill="#b0b0b8"/>
<rect x="1474.8" y="255.5" width="1.2" height="3.6" fill="#a0a0a8"/>
<rect x="1480.5" y="215.0" width="1.2" height="3.6" fill="#b0b0b8"/>
<rect x="1482.3" y="214.7" width="1.2" height="3.6" fill="#a0a0a8"/>
<rect x="1480.5" y="227.0" width="1.2" height="3.6" fill="#b0b0b8"/>
<rect x="1482.3" y="226.7" width="1.2" height="3.6" fill="#a0a0a8"/>
<rect x="1480.5" y="239.0" width="1.2" height="3.6" fill="#b0b0b8"/>
<rect x="1482.3" y="238.7" width="1.2" height="3.6" fill="#a0a0a8"/>
<rect x="1480.5" y="251.0" width="1.2" height="3.6" fill="#b0b0b8"/>
<rect x="1482.3" y="250.7" width="1.2" height="3.6" fill="#a0a0a8"/>
<rect x="1488.0" y="211.4" width="1.2" height="3.6" fill="#b0b0b8"/>
<rect x="1489.8" y="211.1" width="1.2" height="3.6" fill="#a0a0a8"/>
<rect x="1488.0" y="223.0" width="1.2" height="3.6" fill="#b0b0b8"/>
<rect x="1489.8" y="222.7" width="1.2" height="3.6" fill="#a0a0a8"/>
<rect x="1488.0" y="234.6" width="1.2" height="3.6" fill="#b0b0b8"/>
<rect x="1489.8" y="234.3" width="1.2" height="3.6" fill="#a0a0a8"/>
<rect x="1488.0" y="246.1" width="1.2" height="3.6" fill="#b0b0b8"/>
<rect x="1489.8" y="245.8" width="1.2" height="3.6" fill="#a0a0a8"/>
<path d="M1365 304L1500 229" stroke="#c6c6c0" stroke-width="2.2"/>
<path d="M1365 321L1500 240" stroke="#c6c6c0" stroke-width="2.2"/>
<polygon points="1365,341 1500,255 1500,262 1365,349" fill="#1e1e22"/>
<path d="M1389 267V345" stroke="#9c4a30" stroke-width="0.8"/>
</g>
<polygon points="1382.0,317.0 1398.0,308.0 1399.0,313.0 1383.0,322.0" fill="#222226"/>
<polygon points="1466.0,263.0 1480.0,256.0 1481.0,260.0 1467.0,267.0" fill="#222226"/>
<rect x="1434" y="291" width="8" height="6" fill="#3aa8b0"/>
<polygon points="1209.5,222.0 1346.4,187.6 1416.0,198.5 1353.0,201.0 1321.0,199.0 1296.0,224.0 1305.0,231.0 1329.4,228.8 1330.0,254.0 1389.0,267.0 1372.2,275.1" fill="#9394ad"/>
<polygon points="1209.5,222.0 1346.4,187.6 1416.0,198.5 1486.0,204.0 1483.0,210.0 1416.0,204.5 1346.4,193.8 1218.0,227.5" fill="#b95b3c"/>
<path d="M1209.5 222L1346.4 187.6L1416 198.5L1486 204" fill="none" stroke="#55555a" stroke-width="1"/>
<polygon points="1298.0,222.0 1321.0,198.0 1418.0,199.0 1329.4,228.8 1304.0,230.0" fill="#5a5a60"/>
<polygon points="1298.0,222.0 1312.0,212.0 1330.0,216.0 1329.4,228.8 1304.0,230.0" fill="#d8d2b8"/>
<polygon points="1321.0,198.0 1346.0,199.0 1346.0,224.0 1320.0,220.0" fill="#b95b3b"/>
<rect x="1337" y="203" width="5" height="16" fill="#2a2a30"/>
<polygon points="1346.0,200.0 1418.0,199.5 1400.0,212.0 1346.0,222.0" fill="#d6d0bc"/>
<rect x="1349.0" y="203.0" width="3" height="16.0" fill="#2a2a30"/>
<rect x="1355.0" y="203.2" width="3" height="14.7" fill="#2a2a30"/>
<rect x="1361.0" y="203.4" width="3" height="13.4" fill="#2a2a30"/>
<rect x="1367.0" y="203.6" width="3" height="12.1" fill="#2a2a30"/>
<rect x="1373.0" y="203.8" width="3" height="10.8" fill="#2a2a30"/>
<rect x="1379.0" y="204.0" width="3" height="9.5" fill="#2a2a30"/>
<rect x="1385.0" y="204.2" width="3" height="8.2" fill="#2a2a30"/>
<rect x="1391.0" y="204.4" width="3" height="6.9" fill="#2a2a30"/>
<rect x="1397.0" y="204.6" width="3" height="5.6" fill="#2a2a30"/>
<rect x="1403.0" y="204.8" width="3" height="4.3" fill="#2a2a30"/>
<rect x="1303" y="210.0" width="2" height="8" fill="#2a2a30"/>
<rect x="1307" y="208.2" width="2" height="8" fill="#2a2a30"/>
<rect x="1311" y="206.4" width="2" height="8" fill="#2a2a30"/>
<rect x="1315" y="204.6" width="2" height="8" fill="#2a2a30"/>
<rect x="1319" y="202.8" width="2" height="8" fill="#2a2a30"/>
<polygon points="1329.4,228.8 1392.0,245.3 1486.0,204.0 1416.0,198.5" fill="#9394ad"/>
<polygon points="1329.4,228.8 1416.0,198.5 1418.0,201.5 1333.0,231.0" fill="#c0603e"/>
<polygon points="1418.0,195.0 1488.0,201.0 1486.0,206.0 1418.0,200.0" fill="#b95b3c"/>
<path d="M1418 195L1488 201" stroke="#55555a" stroke-width="0.9"/>
<polygon points="1329.4,228.8 1392.0,245.3 1389.0,267.0 1330.0,254.0" fill="#b3573a"/>
<rect x="1337" y="248" width="5" height="8" fill="#d9b8b0" opacity="0.7"/>
<g stroke="#55555f" stroke-width="0.8" fill="none">
<path d="M1232 227L1330 200M1258 236L1320 219M1285 245L1330 233M1310 254L1330 249M1245 217L1355 255M1275 210L1330 228M1300 203L1318 209"/>
<path d="M1350 236L1440 206M1372 241L1462 208M1400 232L1370 224M1430 220L1400 212M1460 210L1435 204"/>
</g>
<rect x="1234.7" y="214.6" width="4.9" height="4.7" fill="#7a7a7e"/>
<rect x="1236.4" y="215.3" width="3.6" height="5.9" fill="#7a7a7e"/>
<rect x="1234.0" y="216.2" width="3.6" height="4.7" fill="#7a7a7e"/>
<rect x="1237.5" y="221.9" width="1.2" height="1.2" fill="#2e2e30"/>
<rect x="1235.4" y="216.5" width="1.2" height="1.2" fill="#2e2e30"/>
<rect x="1238.9" y="223.0" width="1.2" height="1.2" fill="#2e2e30"/>
<rect x="1245.2" y="220.0" width="3.2" height="3.1" fill="#7a7a7e"/>
<rect x="1246.5" y="219.6" width="2.2" height="3.2" fill="#7a7a7e"/>
<rect x="1245.0" y="221.2" width="2.2" height="4.0" fill="#7a7a7e"/>
<rect x="1247.2" y="221.2" width="1.2" height="1.2" fill="#2e2e30"/>
<rect x="1246.8" y="219.4" width="1.2" height="1.2" fill="#2e2e30"/>
<rect x="1244.8" y="220.2" width="1.2" height="1.2" fill="#2e2e30"/>
<rect x="1264.2" y="217.6" width="4.8" height="9.5" fill="#7a7a7e"/>
<rect x="1262.4" y="216.2" width="5.9" height="9.9" fill="#7a7a7e"/>
<rect x="1261.6" y="218.4" width="5.3" height="10.7" fill="#7a7a7e"/>
<rect x="1267.4" y="220.0" width="1.2" height="1.2" fill="#2e2e30"/>
<rect x="1269.4" y="217.7" width="1.2" height="1.2" fill="#2e2e30"/>
<rect x="1264.9" y="226.6" width="1.2" height="1.2" fill="#2e2e30"/>
<rect x="1273.6" y="213.5" width="2.6" height="4.9" fill="#7a7a7e"/>
<rect x="1275.0" y="214.3" width="3.8" height="4.2" fill="#7a7a7e"/>
<rect x="1275.0" y="214.2" width="3.4" height="4.5" fill="#7a7a7e"/>
<rect x="1277.7" y="219.1" width="1.2" height="1.2" fill="#2e2e30"/>
<rect x="1275.9" y="217.1" width="1.2" height="1.2" fill="#2e2e30"/>
<rect x="1273.8" y="217.4" width="1.2" height="1.2" fill="#2e2e30"/>
<rect x="1289.2" y="210.4" width="6.7" height="5.9" fill="#7a7a7e"/>
<rect x="1288.7" y="207.9" width="4.6" height="6.4" fill="#7a7a7e"/>
<rect x="1287.4" y="203.8" width="4.7" height="7.3" fill="#7a7a7e"/>
<rect x="1288.4" y="207.5" width="1.2" height="1.2" fill="#2e2e30"/>
<rect x="1290.7" y="213.7" width="1.2" height="1.2" fill="#2e2e30"/>
<rect x="1287.9" y="209.5" width="1.2" height="1.2" fill="#2e2e30"/>
<rect x="1290.6" y="226.0" width="7.5" height="9.1" fill="#7a7a7e"/>
<rect x="1289.5" y="222.2" width="6.1" height="9.2" fill="#7a7a7e"/>
<rect x="1294.3" y="221.3" width="5.5" height="6.8" fill="#7a7a7e"/>
<rect x="1291.3" y="227.3" width="1.2" height="1.2" fill="#2e2e30"/>
<rect x="1294.9" y="224.7" width="1.2" height="1.2" fill="#2e2e30"/>
<rect x="1289.0" y="226.5" width="1.2" height="1.2" fill="#2e2e30"/>
<rect x="1282.9" y="232.5" width="4.7" height="5.7" fill="#7a7a7e"/>
<rect x="1283.8" y="233.6" width="4.2" height="4.1" fill="#7a7a7e"/>
<rect x="1285.1" y="233.5" width="4.6" height="5.9" fill="#7a7a7e"/>
<rect x="1285.2" y="234.2" width="1.2" height="1.2" fill="#2e2e30"/>
<rect x="1283.4" y="236.1" width="1.2" height="1.2" fill="#2e2e30"/>
<rect x="1283.2" y="231.5" width="1.2" height="1.2" fill="#2e2e30"/>
<rect x="1309.0" y="232.1" width="3.6" height="4.1" fill="#7a7a7e"/>
<rect x="1308.4" y="231.7" width="3.2" height="4.9" fill="#7a7a7e"/>
<rect x="1308.0" y="235.8" width="4.1" height="4.4" fill="#7a7a7e"/>
<rect x="1310.5" y="234.8" width="1.2" height="1.2" fill="#2e2e30"/>
<rect x="1311.2" y="233.0" width="1.2" height="1.2" fill="#2e2e30"/>
<rect x="1314.1" y="239.9" width="1.2" height="1.2" fill="#2e2e30"/>
<rect x="1314.9" y="202.1" width="3.2" height="3.7" fill="#7a7a7e"/>
<rect x="1313.7" y="201.0" width="4.5" height="3.8" fill="#7a7a7e"/>
<rect x="1312.7" y="204.2" width="4.0" height="3.8" fill="#7a7a7e"/>
<rect x="1316.9" y="200.7" width="1.2" height="1.2" fill="#2e2e30"/>
<rect x="1316.8" y="207.3" width="1.2" height="1.2" fill="#2e2e30"/>
<rect x="1318.8" y="205.4" width="1.2" height="1.2" fill="#2e2e30"/>
<rect x="1337.8" y="188.8" width="3.3" height="5.1" fill="#7a7a7e"/>
<rect x="1338.7" y="191.3" width="3.6" height="4.0" fill="#7a7a7e"/>
<rect x="1339.4" y="191.7" width="4.5" height="5.2" fill="#7a7a7e"/>
<rect x="1342.3" y="193.7" width="1.2" height="1.2" fill="#2e2e30"/>
<rect x="1338.8" y="192.1" width="1.2" height="1.2" fill="#2e2e30"/>
<rect x="1339.5" y="188.7" width="1.2" height="1.2" fill="#2e2e30"/>
<rect x="1378.4" y="197.0" width="3.5" height="5.7" fill="#7a7a7e"/>
<rect x="1381.5" y="197.5" width="4.7" height="6.4" fill="#7a7a7e"/>
<rect x="1382.1" y="198.0" width="3.4" height="4.5" fill="#7a7a7e"/>
<rect x="1380.2" y="198.6" width="1.2" height="1.2" fill="#2e2e30"/>
<rect x="1382.7" y="204.2" width="1.2" height="1.2" fill="#2e2e30"/>
<rect x="1384.0" y="200.8" width="1.2" height="1.2" fill="#2e2e30"/>
<rect x="1396.4" y="204.1" width="5.3" height="4.2" fill="#7a7a7e"/>
<rect x="1397.1" y="204.2" width="7.3" height="3.9" fill="#7a7a7e"/>
<rect x="1392.9" y="203.9" width="6.0" height="4.4" fill="#7a7a7e"/>
<rect x="1402.7" y="204.4" width="1.2" height="1.2" fill="#2e2e30"/>
<rect x="1397.0" y="207.7" width="1.2" height="1.2" fill="#2e2e30"/>
<rect x="1400.2" y="203.0" width="1.2" height="1.2" fill="#2e2e30"/>
<rect x="1359.2" y="224.0" width="4.6" height="7.4" fill="#7a7a7e"/>
<rect x="1359.2" y="228.7" width="4.8" height="7.0" fill="#7a7a7e"/>
<rect x="1360.8" y="227.8" width="3.2" height="5.0" fill="#7a7a7e"/>
<rect x="1365.8" y="231.5" width="1.2" height="1.2" fill="#2e2e30"/>
<rect x="1363.2" y="234.3" width="1.2" height="1.2" fill="#2e2e30"/>
<rect x="1362.6" y="233.7" width="1.2" height="1.2" fill="#2e2e30"/>
<rect x="1374.2" y="225.1" width="6.9" height="5.9" fill="#7a7a7e"/>
<rect x="1369.5" y="227.4" width="6.9" height="6.3" fill="#7a7a7e"/>
<rect x="1368.4" y="229.5" width="7.3" height="6.4" fill="#7a7a7e"/>
<rect x="1376.0" y="234.0" width="1.2" height="1.2" fill="#2e2e30"/>
<rect x="1374.0" y="234.2" width="1.2" height="1.2" fill="#2e2e30"/>
<rect x="1375.0" y="230.3" width="1.2" height="1.2" fill="#2e2e30"/>
<rect x="1393.5" y="228.0" width="3.2" height="2.8" fill="#7a7a7e"/>
<rect x="1392.0" y="230.4" width="2.8" height="3.2" fill="#7a7a7e"/>
<rect x="1394.3" y="229.5" width="3.0" height="3.3" fill="#7a7a7e"/>
<rect x="1395.3" y="232.4" width="1.2" height="1.2" fill="#2e2e30"/>
<rect x="1393.0" y="231.3" width="1.2" height="1.2" fill="#2e2e30"/>
<rect x="1393.7" y="229.9" width="1.2" height="1.2" fill="#2e2e30"/>
<rect x="1400.2" y="231.2" width="3.3" height="3.6" fill="#7a7a7e"/>
<rect x="1400.7" y="231.2" width="3.4" height="3.3" fill="#7a7a7e"/>
<rect x="1399.5" y="232.0" width="3.2" height="3.3" fill="#7a7a7e"/>
<rect x="1400.9" y="235.2" width="1.2" height="1.2" fill="#2e2e30"/>
<rect x="1402.0" y="234.9" width="1.2" height="1.2" fill="#2e2e30"/>
<rect x="1403.2" y="231.8" width="1.2" height="1.2" fill="#2e2e30"/>
<rect x="1445.3" y="208.1" width="10.5" height="3.2" fill="#7a7a7e"/>
<rect x="1442.8" y="206.1" width="7.3" height="3.4" fill="#7a7a7e"/>
<rect x="1440.9" y="206.4" width="10.3" height="4.6" fill="#7a7a7e"/>
<rect x="1445.2" y="209.3" width="1.2" height="1.2" fill="#2e2e30"/>
<rect x="1452.2" y="205.9" width="1.2" height="1.2" fill="#2e2e30"/>
<rect x="1455.4" y="210.8" width="1.2" height="1.2" fill="#2e2e30"/>
<rect x="1467.0" y="202.9" width="3.7" height="3.2" fill="#7a7a7e"/>
<rect x="1470.3" y="202.5" width="3.3" height="3.1" fill="#7a7a7e"/>
<rect x="1468.4" y="201.0" width="3.4" height="3.0" fill="#7a7a7e"/>
<rect x="1471.3" y="200.6" width="1.2" height="1.2" fill="#2e2e30"/>
<rect x="1470.3" y="202.7" width="1.2" height="1.2" fill="#2e2e30"/>
<rect x="1467.1" y="202.2" width="1.2" height="1.2" fill="#2e2e30"/>
<rect x="1244.8000000000002" y="206" width="1.3" height="10" fill="#6e6e72"/>
<rect x="1266.2" y="208" width="1.3" height="8" fill="#6e6e72"/>
<rect x="1271.4" y="200" width="1.3" height="11" fill="#6e6e72"/>
<rect x="1294.1000000000001" y="195" width="1.3" height="12" fill="#6e6e72"/>
<rect x="1316.0" y="190" width="1.3" height="9" fill="#6e6e72"/>
<rect x="1340.4" y="184" width="1.3" height="9" fill="#6e6e72"/>
<rect x="1363.0" y="186" width="1.3" height="10" fill="#6e6e72"/>
<rect x="1400.0" y="190" width="1.3" height="10" fill="#6e6e72"/>
<rect x="1433.4" y="186" width="1.3" height="15" fill="#6e6e72"/>
<rect x="1452.4" y="190" width="1.3" height="20" fill="#6e6e72"/>
<rect x="1290.4" y="220" width="1.3" height="16" fill="#6e6e72"/>
<rect x="1317.4" y="222" width="1.3" height="18" fill="#6e6e72"/>
<rect x="1379.4" y="190" width="1.3" height="10" fill="#6e6e72"/>
<path d="M1209.5 222L1372.2 275.1L1389 267M1372.2 275.1V344.5" stroke="#707078" stroke-width="0.9" fill="none"/>
<path d="M1392 245.3L1486 204" stroke="#707078" stroke-width="0.9" fill="none"/>
<path d="M1340 241V232" stroke="#0000ff" stroke-width="1.2"/><path d="M1340 241L1334 244" stroke="#ff0000" stroke-width="1.2"/><path d="M1340 241L1346 242.5" stroke="#00dd00" stroke-width="1.2"/>
</svg>
<!-- collisions panel -->
<div class="a dk" style="left:943px;top:446px;width:833px;height:39px"></div>
<div class="a wh" style="left:943px;top:485px;width:833px;height:342px"></div>
<div class="a" style="left:1003px;top:485px;width:773px;height:33px;background:#686868"></div>
<div class="a" style="left:943px;top:827px;width:833px;height:8px;background:#686868"></div>
<div class="a" style="left:943px;top:827px;width:119px;height:8px;background:#3a93b0"></div>
<div class="a" style="left:1336px;top:450px;width:48px;height:3px;background:#3a93b0"></div>

<svg width="20" height="16" viewBox="0 0 20 16" style="left:958px;top:460.5px"><path d="M1 1.9H14.3M1 6H14.3M1 10H10" stroke="#f4f4f4" stroke-width="2.1"/><path d="M11.9 8.9L16.9 12L11.9 15.1Z" fill="#f4f4f4"/></svg>
<div class="t" style="left:991px;top:462.1px;font-size:14.3px;color:#e3e3e3">Коллизии (количество: 0)</div>
<svg width="160" height="24" viewBox="0 0 160 24" style="left:1601px;top:457px">
<g fill="none" stroke="#e6e6e6" stroke-width="1.7">
<g stroke-width="1.5"><path d="M10.2 13.9H7.3Q5.3 13.9 5.3 11.9V4.8Q5.3 2.8 7.3 2.8H15.3Q17.3 2.8 17.3 4.8V8.2"/>
<path d="M17.3 8.2V11.9Q17.3 13.9 15.3 13.9H10.2"/>
<path d="M10.2 13.9V17.3Q10.2 19.3 12.2 19.3H20.3Q22.3 19.3 22.3 17.3V10.2Q22.3 8.2 20.3 8.2H12.2Q10.2 8.2 10.2 10.2Z"/></g>
<path d="M42 5H56.3M42 19.9H56.3"/><path d="M48.9 8V17" stroke-width="1.5"/>
<path d="M83 3V6M83 18V21.2" stroke-width="1.5"/>
<path d="M147 10.5L151.2 14.8L155.4 10.5" stroke-width="1.8"/>
</g>
<path d="M46.4 10.2L48.9 6.8L51.4 10.2ZM46.4 14.4L48.9 17.8L51.4 14.4Z" fill="#e6e6e6"/>
<rect x="76" y="10.2" width="13.9" height="3.6" fill="#e6e6e6"/>
<path d="M80 5.4H86L83 8.8ZM80 18.7H86L83 15.2Z" fill="#e6e6e6"/>
</svg>
<svg width="22" height="22" viewBox="0 0 24 24" style="left:1707px;top:458px"><path fill="#e6e6e6" d="M19.14 12.94c.04-.3.06-.61.06-.94 0-.32-.02-.64-.07-.94l2.03-1.58c.18-.14.23-.41.12-.61l-1.92-3.32c-.12-.22-.37-.29-.59-.22l-2.39.96c-.5-.38-1.030-.7-1.62-.94l-.36-2.54c-.04-.24-.24-.41-.48-.41h-3.84c-.24 0-.43.17-.47.41l-.36 2.54c-.59.24-1.13.57-1.62.94l-2.39-.96c-.22-.08-.47 0-.59.22L2.74 8.87c-.12.21-.08.47.12.61l2.03 1.58c-.05.3-.09.63-.09.94s.02.64.07.94l-2.03 1.58c-.18.14-.23.41-.12.61l1.92 3.32c.12.22.37.29.59.22l2.39-.96c.5.38 1.03.7 1.62.94l.36 2.540c.05.24.24.41.48.41h3.84c.24 0 .44-.17.47-.41l.36-2.54c.59-.24 1.13-.56 1.62-.94l2.39.96c.22.08.47 0 .59-.22l1.92-3.32c.12-.22.07-.47-.12-.61l-2.01-1.58zM12 15.6c-1.98 0-3.6-1.62-3.6-3.6s1.62-3.6 3.6-3.6 3.6 1.62 3.6 3.6-1.62 3.6-3.6 3.6z"/></svg>
<div class="a" style="left:961px;top:494px;width:15px;height:15px;border:1.5px solid #7fc0dc;border-radius:1px"></div>
<div class="t" style="left:1019px;top:495px;font-size:11.7px;font-weight:700;color:#e6e6e6">Раздел</div>
<div class="t" style="left:1266.5px;top:495px;font-size:11.6px;font-weight:700;color:#e6e6e6">Элемент (Модель А)</div>
<div class="a" style="left:1700px;top:485px;width:76px;height:33px;overflow:hidden"><div class="t" style="left:4px;top:10px;font-size:11.6px;font-weight:700;color:#e6e6e6">Элемент (Модель B)</div></div>
<!-- right toolbar -->
<div class="a dk" style="left:1784px;top:37px;width:36px;height:795px"></div>
<div class="a" style="left:1784px;top:128px;width:36px;height:2px;background:#c9c9c9"></div>
<div class="a" style="left:1784px;top:397px;width:36px;height:2px;background:#c9c9c9"></div>
<div class="a" style="left:1784px;top:446px;width:36px;height:2px;background:#c9c9c9"></div>
<div class="a" style="left:1784px;top:628px;width:36px;height:2px;background:#c9c9c9"></div>
<div class="a" style="left:1784px;top:720px;width:36px;height:2px;background:#c9c9c9"></div>
<div class="a" style="left:1786px;top:637px;width:32px;height:32px;background:#8c8c8c"></div>
<div class="a" style="left:1786px;top:681px;width:32px;height:32px;background:#8c8c8c"></div>
<svg width="36" height="795" viewBox="0 0 36 795" style="left:1784px;top:37px">
<g fill="none" stroke="#e6e6e6" stroke-width="1.5">
<!-- cloud tree y local = abs-37 -->
<path d="M12 29.5Q7 29.5 7 24.8Q7 20 11.8 19.6Q12.8 13.6 18.5 13.6Q24.2 13.6 25.2 19.6Q30 20 30 24.8Q30 29.5 25 29.5"/>
<path d="M18.5 20V36M18.5 28L13.5 24.5M18.5 31.5L23.5 27M18.5 24.5L21.5 21.5"/>
<!-- focus screen -->
<path d="M12.6 75V72H5.2V55H28.7V63"/>
<path d="M15.5 69V65H19.5M26.5 65H30.5V69M30.5 76.5V80.5H26.5M19.5 80.5H15.5V76.5"/></g><path d="M22.8 68.2L26.8 70.5V75.1L22.8 77.4L18.8 75.1V70.5Z" fill="#e0e0e0"/><g fill="none" stroke="#e6e6e6" stroke-width="1.5">
<!-- ruler -->
<rect x="8.5" y="113.5" width="19" height="5.5"/>
<path d="M8 121.5H28M11.5 116V119M14.5 116V119M17.5 116V119M20.5 116V119M23.5 116V119" stroke-width="1.2"/>
<!-- section planes -->
<path d="M4.5 163.5L13 157H31L22.5 163.5Z" stroke-width="1.3"/>
<!-- section box -->
<path d="M6.4 199H23V215.6H6.4ZM13.4 194.2H30V209.7H13.4ZM6.4 199L13.4 194.2M23 199L30 194.2M23 215.6L30 209.7M6.4 215.6L13.4 209.7" stroke-width="1.2"/>
<!-- floor plan -->
<path d="M7.3 238.3H29.4V257.8H4.3V241.3Z" stroke-width="1.3"/><path d="M23 254.3H29V256.5H23Z" stroke-width="1"/>
<path d="M5 247.4H29M16.3 239V257" stroke-width="1.1" stroke-dasharray="2 1.5"/>
<!-- target -->
<circle cx="18" cy="292.8" r="8.3" stroke-width="1.8"/>
<path d="M18 282V285M18 300.5V303.5M7.5 292.8H10.5M25.5 292.8H28.5" stroke-width="2"/>
<!-- flag circle -->
<circle cx="18" cy="336.9" r="12.5" stroke-width="1"/>
<path d="M12.5 346V328Q16 325.5 19.5 328Q22.5 330.5 25.5 329V336.5Q22.5 338 19.5 335.5Q16 333 12.5 335.5" stroke-width="1.1"/>
<!-- measure lines -->
<path d="M5 389.7L32 373.7M5 398.8L32 383.3M6.4 384.9L23 394.5M13.9 379L31 388.6" stroke-width="1.1"/>
</g>
<path d="M4 127V131H8Z" fill="#e6e6e6"/>
<path d="M13 155V175L22.5 167V147Z" fill="#e6e6e6"/>
<path d="M15.5 199L20.3 194.8V210L15.5 214.5Z" fill="#e6e6e6"/>
<path d="M4.3 241.3L7.3 238.3V241.3Z" fill="#e6e6e6"/>
<path d="M6.4 258.8H30.8V240" fill="none" stroke="#e6e6e6" stroke-width="2" opacity="0.9"/>
<circle cx="18" cy="292.8" r="3.8" fill="#e6e6e6"/>
<text x="5" y="382.8" font-size="6.5" fill="#e6e6e6" font-family="Liberation Sans">1</text>
<text x="13" y="377" font-size="6.5" fill="#e6e6e6" font-family="Liberation Sans">2</text>
<!-- dashed boxes -->
<g fill="none" stroke="#e6e6e6" stroke-width="1.4" stroke-dasharray="2.2 2">
<rect x="6.5" y="423.8" width="23" height="22.5"/>
<rect x="6.5" y="467.5" width="23" height="22.5"/>
<rect x="6.5" y="511.5" width="23" height="22.5"/>
<path d="M15 578H6.5V555.5H29.5V565"/>
</g>
<g fill="none" stroke="#e6e6e6" stroke-width="1">
<path d="M18 429L23 432V437.5L18 440.5L13 437.5V432Z"/><path d="M13 432L18 435L23 432M18 435V440.5"/>
</g>
<path d="M10 479Q18 470 26 479Q18 488 10 479Z" fill="#e6e6e6"/><circle cx="18" cy="479" r="3" fill="#535353"/><circle cx="18" cy="479" r="1.6" fill="#e6e6e6"/>
<path d="M10 523Q18 514 26 523Q18 532 10 523Z" fill="#e6e6e6"/><circle cx="18" cy="523" r="3" fill="#535353"/><path d="M11 515L24.5 531" stroke="#535353" stroke-width="2.5"/><path d="M11 515L24.5 531" stroke="#e6e6e6" stroke-width="1.2"/>
<rect x="16" y="565" width="16" height="16" fill="#e6e6e6"/><path d="M20 569L28 577M28 569L20 577" stroke="#333" stroke-width="1.3"/>
<!-- active cube -->
<path d="M8 608.7L17.1 606L28 608.2L26.2 619.4L17.1 626.3L9.6 621.5Z" fill="#e4e4e4"/><path d="M17.6 612.4L28 608.2L26.2 619.4L17.1 626.3Z" fill="#9c9c9c"/><path d="M8 608.7L17.6 612.4L28 608.2M17.6 612.4L17.1 626.3" fill="none" stroke="#8c8c8c" stroke-width="0.8"/>
<!-- orbit -->
<g fill="none" stroke="#e6e6e6" stroke-width="1.6"><ellipse cx="18" cy="659.7" rx="11.5" ry="4.8"/><ellipse cx="18" cy="659.7" rx="4.8" ry="10.5"/></g>
<path d="M18 654.5V659L14.5 663M18 659L21.5 663" fill="none" stroke="#e6e6e6" stroke-width="0.9"/>
</svg>


</body></html>
